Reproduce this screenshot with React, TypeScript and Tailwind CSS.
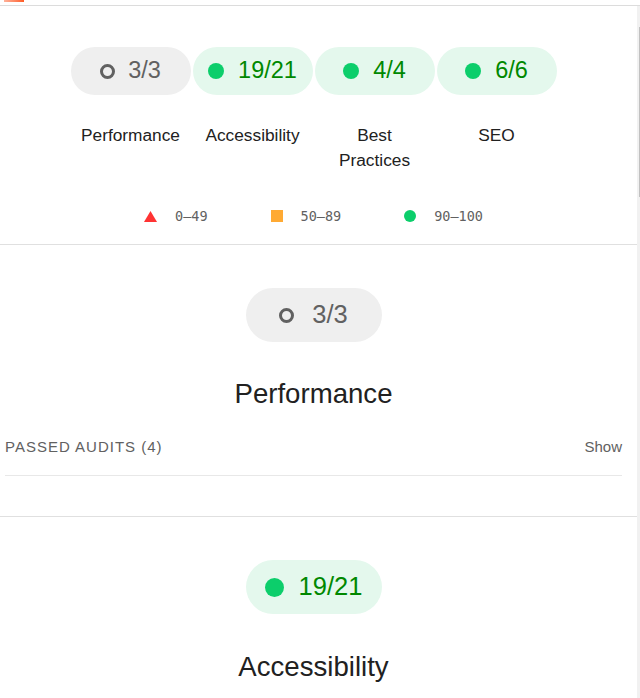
import React from "react";

type Kind = "info" | "pass";

function TopPill({ kind, text }: { kind: Kind; text: string }) {
  const info = kind === "info";
  return (
    <div
      className={`w-[120px] h-[48px] rounded-full flex items-center justify-center ${
        info ? "bg-[#efefef]" : "bg-[#e4f8ed]"
      }`}
    >
      {info ? (
        <span className="w-[15px] h-[15px] rounded-full border-[3px] border-[#616161] mr-[13px]" />
      ) : (
        <span className="w-[16px] h-[16px] rounded-full bg-[#0cce6b] mr-[14px]" />
      )}
      <span className={`text-[23.5px] leading-none ${info ? "text-[#616161]" : "text-[#008800]"}`}>{text}</span>
    </div>
  );
}

function BigPill({ kind, text }: { kind: Kind; text: string }) {
  const info = kind === "info";
  return (
    <div
      className={`w-[136px] h-[54px] rounded-full flex items-center justify-center ${
        info ? "bg-[#efefef]" : "bg-[#e4f8ed]"
      }`}
    >
      {info ? (
        <span className="w-[15px] h-[15px] rounded-full border-[3px] border-[#616161] mr-[18px]" />
      ) : (
        <span className="w-[19px] h-[19px] rounded-full bg-[#0cce6b] mr-[15px]" />
      )}
      <span className={`text-[25.5px] leading-none ${info ? "text-[#616161]" : "text-[#008800]"}`}>{text}</span>
    </div>
  );
}

function Gauge({ kind, text, label }: { kind: Kind; text: string; label: string }) {
  return (
    <div className="w-[122px] flex flex-col items-center">
      <TopPill kind={kind} text={text} />
      <div className="mt-[28px] w-[104px] text-center text-[17.3px] leading-[25px] text-[#212121]">{label}</div>
    </div>
  );
}

export default function App() {
  return (
    <div
      className="w-[640px] h-[698px] overflow-hidden bg-white flex flex-col"
      style={{ fontFamily: '"Liberation Sans", Arial, sans-serif' }}
    >
      <div className="h-[6px] shrink-0 border-b border-[#dcdcdc]">
        <div className="ml-[4px] w-[20px] h-[2px] bg-gradient-to-r from-[#ffb199] to-[#ff5a1f]" />
      </div>
      <div className="flex flex-1 min-h-0">
        <div className="w-[637px] flex flex-col">
          {/* Scores header */}
          <section className="border-b border-[#e0e0e0] pl-[5px] pr-[15px] pt-[41px] pb-[18px]">
            <div className="flex justify-center items-start">
              <Gauge kind="info" text="3/3" label="Performance" />
              <Gauge kind="pass" text="19/21" label="Accessibility" />
              <Gauge kind="pass" text="4/4" label="Best Practices" />
              <Gauge kind="pass" text="6/6" label="SEO" />
            </div>
            <div
              className="mt-[33px] h-[20px] flex items-center justify-center gap-[63px] text-[13.5px] text-[#616161]"
              style={{ fontFamily: '"DejaVu Sans Mono", "Liberation Mono", monospace' }}
            >
              <div className="flex items-center gap-[18px]">
                <svg width="13" height="11" viewBox="0 0 13 11">
                  <polygon points="6.5,0 13,11 0,11" fill="#ff3333" />
                </svg>
                <span>0–49</span>
              </div>
              <div className="flex items-center gap-[18px]">
                <span className="w-[12px] h-[12px] bg-[#ffaa33]" />
                <span>50–89</span>
              </div>
              <div className="flex items-center gap-[18px]">
                <span className="w-[12px] h-[12px] rounded-full bg-[#0cce6b]" />
                <span>90–100</span>
              </div>
            </div>
          </section>

          {/* Performance */}
          <section className="border-b border-[#e0e0e0] pl-[5px] pr-[15px] pt-[43px] pb-[40px]">
            <div className="flex flex-col items-center">
              <BigPill kind="info" text="3/3" />
              <h2 className="mt-[34px] text-[27.6px] leading-[36px] text-[#212121]">Performance</h2>
            </div>
            <div className="mt-[25px] pb-[18px] border-b border-[#e8e8e8] flex items-center justify-between h-[39px] text-[#616161]">
              <span className="text-[15px] leading-[20px] tracking-[1px] uppercase">Passed audits (4)</span>
              <span className="text-[15px] leading-[20px]">Show</span>
            </div>
          </section>

          {/* Accessibility */}
          <section className="pl-[5px] pr-[15px] pt-[43px]">
            <div className="flex flex-col items-center">
              <BigPill kind="pass" text="19/21" />
              <h2 className="mt-[35px] text-[27.6px] leading-[36px] text-[#212121]">Accessibility</h2>
            </div>
          </section>
        </div>
        <div className="w-[3px] bg-[#f1f1f1] relative">
          <div className="absolute left-[2px] top-[21px] w-[1px] h-[170px] bg-[#c1c1c1]" />
        </div>
      </div>
    </div>
  );
}
